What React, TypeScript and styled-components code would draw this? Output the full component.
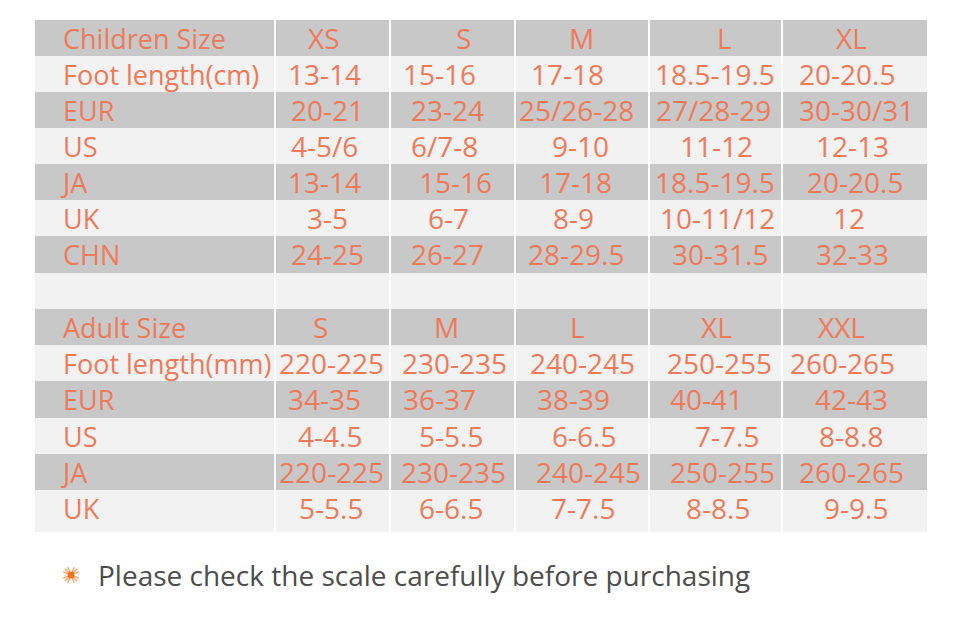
import React from "react";
import styled, { createGlobalStyle } from "styled-components";

// Column widths taken from the chart (with 2px white dividers between)
const COLUMNS = "239px 113px 123px 132px 131px 144px";

type Cell = [string, number];

interface RowData {
  label: string;
  cells: Cell[];
  height: number;
}

const childrenRows: RowData[] = [
  { label: "Children Size", height: 36, cells: [["XS", 32], ["S", 65], ["M", 53], ["L", 67], ["XL", 53]] },
  { label: "Foot length(cm)", height: 36, cells: [["13-14", 12], ["15-16", 12], ["17-18", 15], ["18.5-19.5", 5], ["20-20.5", 16]] },
  { label: "EUR", height: 36, cells: [["20-21", 15], ["23-24", 20], ["25/26-28", 3], ["27/28-29", 6], ["30-30/31", 16]] },
  { label: "US", height: 36, cells: [["4-5/6", 15], ["6/7-8", 20], ["9-10", 36], ["11-12", 30], ["12-13", 33]] },
  { label: "JA", height: 36, cells: [["13-14", 12], ["15-16", 28], ["17-18", 23], ["18.5-19.5", 5], ["20-20.5", 24]] },
  { label: "UK", height: 36, cells: [["3-5", 31], ["6-7", 37], ["8-9", 37], ["10-11/12", 10], ["12", 50]] },
  { label: "CHN", height: 37, cells: [["24-25", 15], ["26-27", 20], ["28-29.5", 12], ["30-31.5", 22], ["32-33", 33]] },
];

const adultRows: RowData[] = [
  { label: "Adult Size", height: 36, cells: [["S", 37], ["M", 43], ["L", 54], ["XL", 51], ["XXL", 35]] },
  { label: "Foot length(mm)", height: 36, cells: [["220-225", 3], ["230-235", 11], ["240-245", 14], ["250-255", 17], ["260-265", 7]] },
  { label: "EUR", height: 37, cells: [["34-35", 12], ["36-37", 12], ["38-39", 21], ["40-41", 20], ["42-43", 32]] },
  { label: "US", height: 36, cells: [["4-4.5", 22], ["5-5.5", 28], ["6-6.5", 36], ["7-7.5", 45], ["8-8.8", 36]] },
  { label: "JA", height: 36, cells: [["220-225", 3], ["230-235", 10], ["240-245", 20], ["250-255", 20], ["260-265", 16]] },
  { label: "UK", height: 42, cells: [["5-5.5", 23], ["6-6.5", 28], ["7-7.5", 35], ["8-8.5", 36], ["9-9.5", 41]] },
];

const GlobalStyle = createGlobalStyle`
  body {
    margin: 0;
    background: #ffffff;
    font-family: "Open Sans", "Noto Sans", sans-serif;
  }
`;

const Page = styled.div`
  width: 960px;
  height: 631px;
  padding: 20px 0 0 35px;
  box-sizing: border-box;
`;

const Chart = styled.div`
  width: 892px;
  display: flex;
  flex-direction: column;
`;

const Row = styled.div<{ $shade: boolean; $h: number }>`
  display: grid;
  grid-template-columns: ${COLUMNS};
  column-gap: 2px;
  height: ${(p) => p.$h}px;
  --cell-bg: ${(p) => (p.$shade ? "#c8c8c8" : "#f2f2f2")};
`;

const Cell = styled.div<{ $indent: number; $label?: boolean }>`
  background: var(--cell-bg);
  color: #ef7a5a;
  font-size: ${(p) => (p.$label ? 27 : 28)}px;
  line-height: 37px;
  white-space: nowrap;
  padding-left: ${(p) => p.$indent}px;
  overflow: visible;
`;

const Footer = styled.div`
  display: flex;
  align-items: center;
  gap: 18px;
  margin: 25px 0 0 27px;
  color: #4d4d4d;
  font-size: 28px;
  line-height: 36px;
`;

const Star = () => (
  <svg width="18" height="18" viewBox="0 0 18 18">
    <defs>
      <radialGradient id="sg" cx="50%" cy="50%" r="50%">
        <stop offset="0%" stopColor="#f07a2a" />
        <stop offset="100%" stopColor="#f5a66a" />
      </radialGradient>
    </defs>
    <g stroke="url(#sg)" strokeWidth="1.4" strokeLinecap="round">
      <line x1="9" y1="1" x2="9" y2="17" />
      <line x1="1" y1="9" x2="17" y2="9" />
      <line x1="3.3" y1="3.3" x2="14.7" y2="14.7" />
      <line x1="14.7" y1="3.3" x2="3.3" y2="14.7" />
      <line x1="5.9" y1="1.6" x2="12.1" y2="16.4" />
      <line x1="12.1" y1="1.6" x2="5.9" y2="16.4" />
      <line x1="1.6" y1="5.9" x2="16.4" y2="12.1" />
      <line x1="1.6" y1="12.1" x2="16.4" y2="5.9" />
    </g>
    <circle cx="9" cy="9" r="3.2" fill="#ef6f20" />
  </svg>
);

const SizeRow: React.FC<{ row: RowData; shade: boolean }> = ({ row, shade }) => (
  <Row $shade={shade} $h={row.height}>
    <Cell $indent={28} $label>
      {row.label}
    </Cell>
    {row.cells.map(([text, indent], i) => (
      <Cell key={i} $indent={indent}>
        {text}
      </Cell>
    ))}
  </Row>
);

const App: React.FC = () => {
  return (
    <>
      <GlobalStyle />
      <Page>
        <Chart>
          {childrenRows.map((row, i) => (
            <SizeRow key={`c${i}`} row={row} shade={i % 2 === 0} />
          ))}
          <SizeRow row={{ label: "", height: 36, cells: [["", 0], ["", 0], ["", 0], ["", 0], ["", 0]] }} shade={false} />
          {adultRows.map((row, i) => (
            <SizeRow key={`a${i}`} row={row} shade={i % 2 === 0} />
          ))}
        </Chart>
        <Footer>
          <Star />
          <span>Please check the scale carefully before purchasing</span>
        </Footer>
      </Page>
    </>
  );
};

export default App;
